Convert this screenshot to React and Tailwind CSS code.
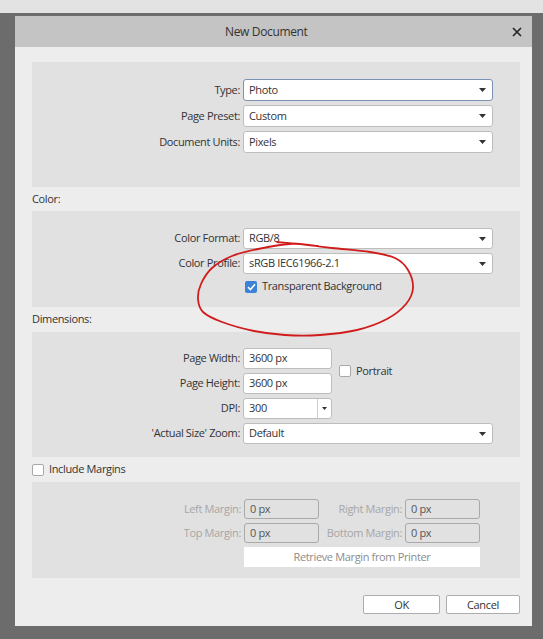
import React from 'react';

// hand-drawn annotation loop, smoothed with catmull-rom
const loopPoints = [
  [277, 242], [300, 244], [332, 248], [370, 252], [395, 258], [408, 270],
  [413, 288], [406, 304], [387, 319], [357, 330], [320, 335], [285, 335],
  [254, 331], [222, 322], [203, 312], [198, 299], [201, 284], [212, 268],
  [232, 256], [258, 249], [290, 244], [318, 246],
];

function smoothPath(pts) {
  let d = `M ${pts[0][0]} ${pts[0][1]}`;
  for (let i = 0; i < pts.length - 1; i++) {
    const p0 = pts[i - 1] || pts[i];
    const p1 = pts[i];
    const p2 = pts[i + 1];
    const p3 = pts[i + 2] || p2;
    const c1x = p1[0] + (p2[0] - p0[0]) / 6;
    const c1y = p1[1] + (p2[1] - p0[1]) / 6;
    const c2x = p2[0] - (p3[0] - p1[0]) / 6;
    const c2y = p2[1] - (p3[1] - p1[1]) / 6;
    d += ` C ${c1x} ${c1y} ${c2x} ${c2y} ${p2[0]} ${p2[1]}`;
  }
  return d;
}

function Caret() {
  return (
    <svg width="7" height="4" viewBox="0 0 7 4" className="shrink-0">
      <path d="M0 0 H7 L3.5 4 Z" fill="#333" />
    </svg>
  );
}

function Select({ value, focused, className = '' }) {
  return (
    <div
      className={`flex items-center justify-between bg-white border rounded-[3px] pl-[5px] pr-[6px] ${
        focused ? 'border-[#7d93b6]' : 'border-[#bdbdbd]'
      } ${className}`}
    >
      <span>{value}</span>
      <Caret />
    </div>
  );
}

function TextBox({ value, className = '' }) {
  return (
    <div className={`flex items-center bg-white border border-[#bdbdbd] rounded-[3px] pl-[5px] ${className}`}>
      {value}
    </div>
  );
}

function Check({ checked }) {
  if (checked) {
    return (
      <div className="w-[12px] h-[12px] rounded-[2px] bg-[#3c82d6] flex items-center justify-center shrink-0">
        <svg width="9" height="8" viewBox="0 0 9 8">
          <path d="M1 4.2 L3.4 6.5 L8 1.2" fill="none" stroke="white" strokeWidth="1.6" />
        </svg>
      </div>
    );
  }
  return <div className="w-[12px] h-[12px] rounded-[2px] bg-white border border-[#a9a9a9] shrink-0" />;
}

function Label({ children, dim }) {
  return (
    <div className={`text-right pr-[3px] whitespace-nowrap ${dim ? 'text-[#a6a6a6]' : ''}`}>{children}</div>
  );
}

function MarginBox({ value }) {
  return (
    <div className="h-[20px] flex items-center border border-[#a9a9a9] rounded-[3px] pl-[5px] text-[#555]">
      {value}
    </div>
  );
}

export default function App() {
  return (
    <div className="relative w-[543px] h-[639px] bg-[#6c6c6c] overflow-hidden font-['Open_Sans',sans-serif] text-[11px] tracking-[-0.35px] text-[#333]">
      <div className="h-[13px] bg-[#e3e3e3]" />
      <div className="pl-[15px] pt-[3px]">
        <div className="w-[517px] h-[610px] bg-[#ededed] flex flex-col">
          {/* title bar */}
          <div className="h-[31px] bg-[#c4c4c4] flex items-center">
            <span className="ml-[210px] text-[12px]">New Document</span>
            <svg width="10" height="10" viewBox="0 0 10 10" className="ml-auto mr-[10px]">
              <path d="M1 1 L9 9 M9 1 L1 9" stroke="#222" strokeWidth="1.6" />
            </svg>
          </div>

          <div className="pl-[17px] pr-[12px] pt-[15px] flex flex-col">
            {/* document */}
            <div className="h-[125px] bg-[#e1e1e1] pt-[17px]">
              <div className="grid grid-cols-[211px_250px] gap-y-[4px] items-center">
                <Label>Type:</Label>
                <Select value="Photo" focused className="h-[22px]" />
                <Label>Page Preset:</Label>
                <Select value="Custom" className="h-[22px]" />
                <Label>Document Units:</Label>
                <Select value="Pixels" className="h-[22px]" />
              </div>
            </div>

            {/* color */}
            <div className="h-[24px] flex items-center">Color:</div>
            <div className="h-[96px] bg-[#e1e1e1] pt-[17px]">
              <div className="grid grid-cols-[211px_250px] gap-y-[4px] items-center">
                <Label>Color Format:</Label>
                <Select value="RGB/8" className="h-[21px]" />
                <Label>Color Profile:</Label>
                <Select value="sRGB IEC61966-2.1" className="h-[21px]" />
                <div />
                <div className="flex items-center gap-[5px] pl-[2px] h-[17px]">
                  <Check checked />
                  <span>Transparent Background</span>
                </div>
              </div>
            </div>

            {/* dimensions */}
            <div className="h-[25px] flex items-center">Dimensions:</div>
            <div className="h-[125px] bg-[#e1e1e1] pt-[16px]">
              <div className="grid grid-cols-[211px_89px_161px] grid-rows-[21px_21px_21px_21px] gap-y-[4px] items-center">
                <Label>Page Width:</Label>
                <TextBox value="3600 px" className="h-[21px]" />
                <div className="col-start-3 row-start-1 row-span-2 flex items-center gap-[5px] pl-[7px]">
                  <Check />
                  <span>Portrait</span>
                </div>
                <Label>Page Height:</Label>
                <TextBox value="3600 px" className="h-[21px]" />
                <Label>DPI:</Label>
                <div className="h-[21px] flex bg-white border border-[#bdbdbd] rounded-[3px]">
                  <span className="flex-1 flex items-center pl-[5px]">300</span>
                  <span className="w-[14px] border-l border-[#cfcfcf] flex items-center justify-center">
                    <svg width="5" height="3" viewBox="0 0 5 3">
                      <path d="M0 0 H5 L2.5 3 Z" fill="#333" />
                    </svg>
                  </span>
                </div>
                <div />
                <Label>'Actual Size' Zoom:</Label>
                <Select value="Default" className="h-[21px] col-span-2" />
              </div>
            </div>

            {/* margins */}
            <div className="h-[25px] flex items-center gap-[5px]">
              <Check />
              <span>Include Margins</span>
            </div>
            <div className="h-[96px] bg-[#e1e1e1] pt-[17px]">
              <div className="grid grid-cols-[212px_75px_86px_75px] gap-y-[4px] items-center">
                <Label dim>Left Margin:</Label>
                <MarginBox value="0 px" />
                <Label dim>Right Margin:</Label>
                <MarginBox value="0 px" />
                <Label dim>Top Margin:</Label>
                <MarginBox value="0 px" />
                <Label dim>Bottom Margin:</Label>
                <MarginBox value="0 px" />
                <div className="col-start-2 col-span-3 h-[20px] bg-white flex items-center justify-center text-[#8c8c8c]">
                  Retrieve Margin from Printer
                </div>
              </div>
            </div>

            {/* buttons */}
            <div className="flex justify-end gap-[6px] mt-[17px]">
              <button className="w-[77px] h-[19px] bg-white border border-[#adadad] rounded-[2px] leading-none">OK</button>
              <button className="w-[74px] h-[19px] bg-white border border-[#adadad] rounded-[2px] leading-none">Cancel</button>
            </div>
          </div>
        </div>
      </div>

      <svg className="absolute top-0 left-0 pointer-events-none" width="543" height="639" viewBox="0 0 543 639">
        <path d={smoothPath(loopPoints)} fill="none" stroke="#d01c1c" strokeWidth="1.8" strokeLinecap="round" strokeLinejoin="round" />
      </svg>
    </div>
  );
}
